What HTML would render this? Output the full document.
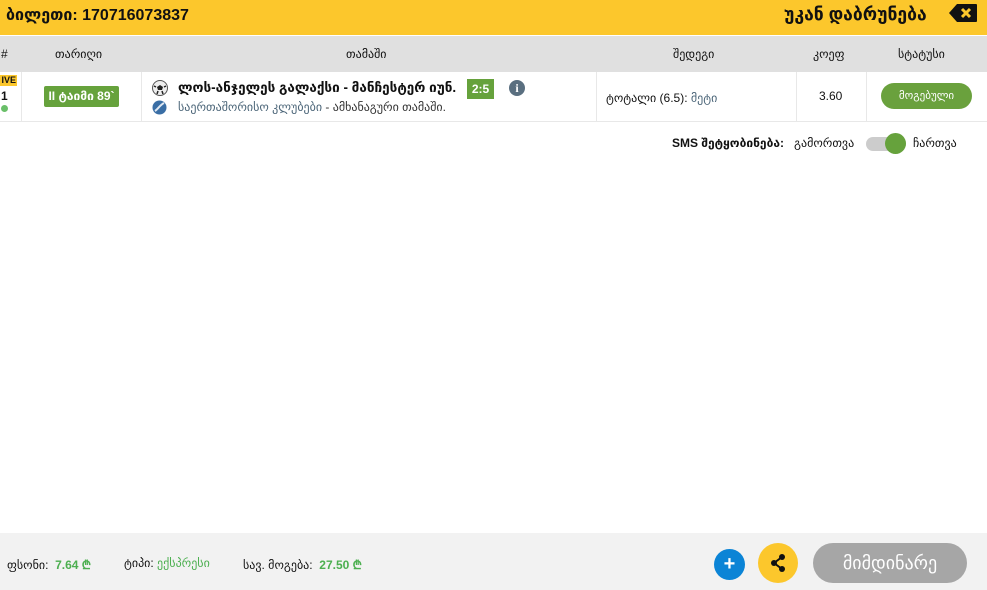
<!DOCTYPE html>
<html><head><meta charset="utf-8"><style>
*{box-sizing:border-box;margin:0;padding:0}
body{width:987px;height:590px;position:relative;background:#fff;font-family:"Liberation Sans","DejaVu Sans",sans-serif;color:#111;overflow:hidden}
.top{position:absolute;left:0;top:0;width:987px;height:35px;background:#fcc72c}
.abs{position:absolute;white-space:nowrap}
.th{position:absolute;top:36px;height:36px;background:#e0e0e0;width:987px}
.row{position:absolute;top:72px;height:50px;width:987px;border-bottom:1px solid #e8e8e8}
.vl{position:absolute;top:72px;height:50px;width:1px;background:#e8e8e8}
.foot{position:absolute;top:533px;left:0;width:987px;height:57px;background:#f2f2f2}
.g{color:#4caf50;font-weight:bold}
</style></head><body>
<div class="top"></div>
<div class="abs" style="left:6px;top:5px;font-size:16px;font-weight:bold">ბილეთი: 170716073837</div>
<div class="abs" style="left:784px;top:4px;font-size:17.5px;font-weight:bold">უკან დაბრუნება</div>
<svg class="abs" style="left:949px;top:3px" width="29" height="20" viewBox="0 0 29 20"><path d="M8 1H27a1 1 0 0 1 1 1V18a1 1 0 0 1-1 1H8L0 10Z" fill="#111"/><path d="M13 6l8 8M21 6l-8 8" stroke="#fcc72c" stroke-width="3"/></svg>
<div class="th"></div>
<div class="abs" style="left:1px;top:47px;font-size:12px">#</div>
<div class="abs" style="left:55px;top:47px;font-size:12px">თარიღი</div>
<div class="abs" style="left:346px;top:47px;font-size:12px">თამაში</div>
<div class="abs" style="left:673px;top:47px;font-size:12px">შედეგი</div>
<div class="abs" style="left:813px;top:47px;font-size:12px">კოეფ</div>
<div class="abs" style="left:898px;top:47px;font-size:12px">სტატუსი</div>
<div class="row"></div>
<div class="vl" style="left:21px"></div><div class="vl" style="left:141px"></div><div class="vl" style="left:596px"></div><div class="vl" style="left:796px"></div><div class="vl" style="left:866px"></div>
<div class="abs" style="left:0;top:75px;width:17px;height:11px;background:#fcc72c;font-size:9px;font-weight:bold;line-height:11px;text-align:right;padding-right:1px">IVE</div>
<div class="abs" style="left:1px;top:89px;font-size:12px;font-weight:bold">1</div>
<div class="abs" style="left:1px;top:105px;width:7px;height:7px;border-radius:50%;background:#6abf69"></div>
<div class="abs" style="left:44px;top:86px;width:75px;height:21px;background:#66a23c;border-radius:2px;color:#fff;font-size:12px;font-weight:bold;text-align:center;line-height:21px">II ტაიმი 89`</div>
<svg class="abs" style="left:152px;top:80px" width="16" height="16" viewBox="0 0 16 16"><circle cx="8" cy="8" r="7.5" fill="#eee" stroke="#555"/><path d="M8 5l3 2-1 3H6L5 7z" fill="#222"/><path d="M2 6l2 1M14 6l-2 1M5 14l1-3M11 14l-1-3" stroke="#222" stroke-width="1.5"/></svg>
<div class="abs" style="left:178px;top:80px;font-size:13.5px;font-weight:bold">ლოს-ანჯელეს გალაქსი - მანჩესტერ იუნ.</div>
<div class="abs" style="left:467px;top:79px;width:27px;height:20px;background:#66a23c;color:#fff;font-size:12px;font-weight:bold;text-align:center;line-height:20px">2:5</div>
<div class="abs" style="left:509px;top:80px;width:16px;height:16px;border-radius:50%;background:#5a6f80;color:#fff;font-size:12px;font-weight:bold;text-align:center;line-height:16px;font-family:'Liberation Serif',serif">i</div>
<svg class="abs" style="left:152px;top:100px" width="15" height="15" viewBox="0 0 15 15"><circle cx="7.5" cy="7.5" r="7" fill="#3a6ea5"/><path d="M3 11C6 9 8 5 12 3" stroke="#dfe8f2" stroke-width="2" fill="none"/></svg>
<div class="abs" style="left:178px;top:100px;font-size:12px;color:#4b6578">საერთაშორისო კლუბები <span style="color:#333">- ამხანაგური თამაში.</span></div>
<div class="abs" style="left:606px;top:91px;font-size:12px">ტოტალი (6.5): <span style="color:#4b6578">მეტი</span></div>
<div class="abs" style="left:819px;top:89px;font-size:12px">3.60</div>
<div class="abs" style="left:881px;top:83px;width:91px;height:26px;border-radius:13px;background:#6aa13d;color:#fff;font-size:11px;text-align:center;line-height:26px">მოგებული</div>
<div class="abs" style="left:672px;top:136px;font-size:12px;font-weight:bold">SMS შეტყობინება:</div>
<div class="abs" style="left:794px;top:136px;font-size:12px">გამორთვა</div>
<div class="abs" style="left:866px;top:137px;width:40px;height:14px;border-radius:7px;background:#ccc"></div>
<div class="abs" style="left:885px;top:133px;width:21px;height:21px;border-radius:50%;background:#66a23c"></div>
<div class="abs" style="left:913px;top:136px;font-size:12px">ჩართვა</div>
<div class="foot"></div>
<div class="abs" style="left:7px;top:556px;font-size:12px">ფსონი: <span class="g">&nbsp;7.64 ₾</span></div>
<div class="abs" style="left:124px;top:556px;font-size:12px">ტიპი: <span class="g" style="font-weight:normal">ექსპრესი</span></div>
<div class="abs" style="left:243px;top:556px;font-size:12px">სავ. მოგება: <span class="g">&nbsp;27.50 ₾</span></div>
<div class="abs" style="left:714px;top:549px;width:31px;height:31px;border-radius:50%;background:#0b84d6;color:#fff;font-size:20px;font-weight:bold;text-align:center;line-height:31px">+</div>
<div class="abs" style="left:758px;top:543px;width:40px;height:40px;border-radius:50%;background:#fcc72c"></div>
<svg class="abs" style="left:768px;top:553px" width="20" height="20" viewBox="0 0 20 20"><path d="M14 4L6 10l8 6" stroke="#111" stroke-width="2" fill="none"/><circle cx="14" cy="4" r="3" fill="#111"/><circle cx="6" cy="10" r="3" fill="#111"/><circle cx="14" cy="16" r="3" fill="#111"/></svg>
<div class="abs" style="left:813px;top:543px;width:154px;height:40px;border-radius:20px;background:#a6a6a6;color:#fff;font-size:18px;text-align:center;line-height:40px">მიმდინარე</div>
</body></html>
